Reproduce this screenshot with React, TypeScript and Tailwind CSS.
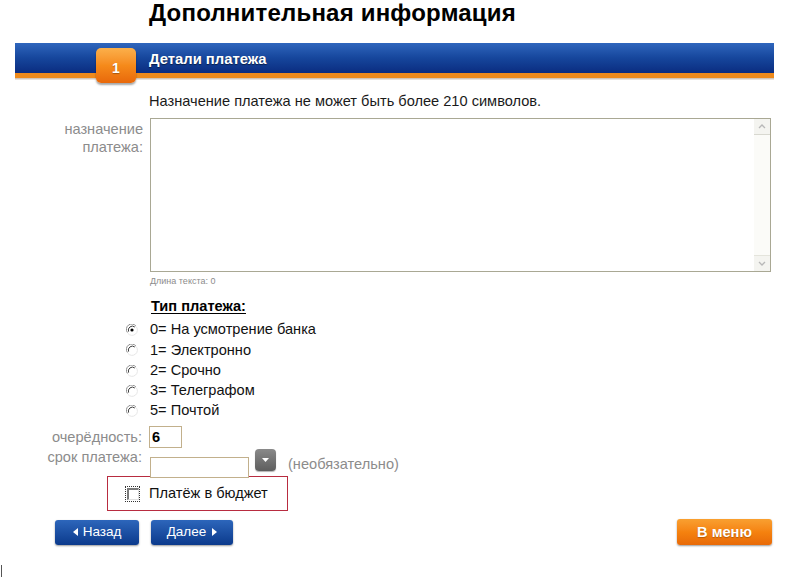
import React from "react";

const font = { fontFamily: '"Liberation Sans", Arial, sans-serif' };

function Radio({ checked }: { checked?: boolean }) {
  return (
    <svg width="12" height="12" viewBox="0 0 12 12" className="shrink-0">
      <circle cx="6" cy="6" r="5.5" fill="#ffffff" />
      <path d="M10 2.2 A5.2 5.2 0 0 0 1.4 8.5" fill="none" stroke="#8a8a8a" strokeWidth="1" />
      <path d="M8.8 3 A4 4 0 0 0 2.6 7.6" fill="none" stroke="#404040" strokeWidth="1" />
      <path d="M1.9 9.4 A5.2 5.2 0 0 0 10.2 2.6" fill="none" stroke="#e6e6e6" strokeWidth="1" />
      {checked && <circle cx="6" cy="6" r="1.6" fill="#000" />}
    </svg>
  );
}

export default function App() {
  const options = [
    "0= На усмотрение банка",
    "1= Электронно",
    "2= Срочно",
    "3= Телеграфом",
    "5= Почтой",
  ];
  return (
    <div className="relative w-[800px] h-[577px] bg-white overflow-hidden text-[#1a1a1a]" style={font}>
      <h1 className="pl-[149px] pt-[0px] text-[24px] leading-[26px] font-bold text-black tracking-[0.2px]">
        Дополнительная информация
      </h1>

      {/* section bar */}
      <div className="relative mt-[17px] ml-[15px] w-[759px]">
        <div className="h-[30px] bg-gradient-to-b from-[#2f66bd] via-[#16469c] to-[#0b2c80] flex items-center pt-[3px]">
          <span className="ml-[134px] text-white font-bold text-[14.8px] [text-shadow:0_1px_1px_rgba(0,0,0,0.5)]">
            Детали платежа
          </span>
        </div>
        <div className="h-[5px] bg-[#ee8a1c]" />
        <div className="h-[2px] bg-gradient-to-b from-[#c8b8a8] to-[#f4f0ee]" />
        <div className="absolute left-[81px] top-[5px] w-[40px] h-[35px] pt-[5px] rounded-[5px] bg-gradient-to-b from-[#fbb04a] via-[#f58a1a] to-[#e8680a] shadow-[0_2px_2px_rgba(0,0,0,0.35)] flex items-center justify-center text-white font-bold text-[14px] [text-shadow:0_1px_1px_rgba(0,0,0,0.3)]">
          1
        </div>
      </div>

      <div className="pl-[149px] mt-[13px] text-[14.6px] leading-[16px] text-[#1a1a1a]">
        Назначение платежа не может быть более 210 символов.
      </div>

      {/* textarea */}
      <div className="flex mt-[9px]">
        <div className="w-[143px] shrink-0 text-right text-[14.6px] leading-[18px] text-[#8c8c8c] pt-[2px]">
          назначение
          <br />
          платежа:
        </div>
        <div className="ml-[7px]">
          <div className="w-[621px] h-[154px] border border-[#a9a894] bg-white flex justify-end">
            <div className="w-[16px] h-full bg-[#fbfbf8] flex flex-col justify-between">
              <div className="h-[16px] bg-[#f4f4f0] border-b border-[#d8d8d0] flex items-center justify-center">
                <svg width="8" height="5" viewBox="0 0 8 5"><path d="M1 4 L4 1 L7 4" fill="none" stroke="#b8b8b8" strokeWidth="1.3" /></svg>
              </div>
              <div className="h-[16px] bg-[#f4f4f0] border-t border-[#e4e4dc] flex items-center justify-center">
                <svg width="8" height="5" viewBox="0 0 8 5"><path d="M1 1 L4 4 L7 1" fill="none" stroke="#b8b8b8" strokeWidth="1.3" /></svg>
              </div>
            </div>
          </div>
          <div className="text-[9px] leading-[10px] text-[#8c8c8c] mt-[4px]">Длина текста: 0</div>
        </div>
      </div>

      {/* payment type */}
      <div className="pl-[151px] mt-[12px] text-[14.6px] leading-[16px] font-bold underline underline-offset-[2px] text-black">
        Тип платежа:
      </div>
      <div className="mt-[6px] flex flex-col">
        {options.map((o, i) => (
          <div key={o} className="flex items-center h-[20.3px]">
            <div className="w-[126px]" />
            <Radio checked={i === 0} />
            <span className="ml-[12px] text-[14.6px] text-[#111]">{o}</span>
          </div>
        ))}
      </div>

      {/* priority */}
      <div className="flex items-center mt-[5px]">
        <div className="w-[142px] shrink-0 text-right text-[14.6px] text-[#8c8c8c]">очерёдность:</div>
        <div className="ml-[7px] w-[33px] h-[22px] border border-[#c2b08c] bg-white flex items-center pl-[2px] text-[14.6px] font-bold text-black">
          6
        </div>
      </div>

      {/* due date */}
      <div className="flex mt-[1px] h-[28px]">
        <div className="w-[142px] shrink-0 text-right text-[14.6px] leading-[16px] text-[#8c8c8c]">срок платежа:</div>
        <div className="ml-[8px] mt-[8px] w-[99px] h-[21px] border border-[#c2b08c] bg-white" />
        <div className="ml-[6px] w-[21px] h-[22px] rounded-[4px] bg-gradient-to-b from-[#8a8a8a] to-[#5e5e5e] flex items-center justify-center shadow-[0_1px_1px_rgba(0,0,0,0.3)]">
          <svg width="7" height="4" viewBox="0 0 7 4"><path d="M0 0 H7 L3.5 4 Z" fill="#fff" /></svg>
        </div>
        <span className="ml-[12px] mt-[7px] text-[14.6px] leading-[16px] text-[#8c8c8c]">(необязательно)</span>
      </div>

      {/* budget checkbox */}
      <div className="-mt-[1px] ml-[107px] w-[181px] h-[35px] border border-[#b82c40] flex items-center">
        <div className="ml-[17px] w-[15px] h-[16px] border border-dotted border-[#333] flex items-center justify-center">
          <div className="w-[12px] h-[12px] bg-white border-t-[2px] border-l-[2px] border-t-[#7a7a7a] border-l-[#7a7a7a] border-r border-b border-r-[#e0e0e0] border-b-[#e0e0e0]" />
        </div>
        <span className="ml-[9px] text-[14.6px] text-[#111]">Платёж в бюджет</span>
      </div>

      {/* buttons */}
      <div className="flex items-center mt-[8px] pr-[28px]">
        <button className="ml-[55px] w-[84px] h-[25px] rounded-[3px] bg-gradient-to-b from-[#2d66bb] to-[#0b3a8c] shadow-[0_1px_2px_rgba(0,0,0,0.4)] text-white text-[13.5px] flex items-center justify-center gap-[5px]">
          <svg width="5" height="8" viewBox="0 0 5 8"><path d="M5 0 V8 L0 4 Z" fill="#fff" /></svg>
          Назад
        </button>
        <button className="ml-[12px] w-[82px] h-[25px] rounded-[3px] bg-gradient-to-b from-[#2d66bb] to-[#0b3a8c] shadow-[0_1px_2px_rgba(0,0,0,0.4)] text-white text-[13.5px] flex items-center justify-center gap-[6px]">
          Далее
          <svg width="5" height="8" viewBox="0 0 5 8"><path d="M0 0 V8 L5 4 Z" fill="#fff" /></svg>
        </button>
        <div className="flex-1" />
        <button className="w-[95px] h-[26px] rounded-[3px] bg-gradient-to-b from-[#f9a030] via-[#f5820f] to-[#e86a08] shadow-[0_1px_2px_rgba(0,0,0,0.4)] text-white text-[14.6px] font-bold [text-shadow:0_1px_1px_rgba(0,0,0,0.25)]">
          В меню
        </button>
      </div>

      <div className="absolute left-[1px] top-[565px] w-[1px] h-[12px] bg-[#555]" />
    </div>
  );
}
